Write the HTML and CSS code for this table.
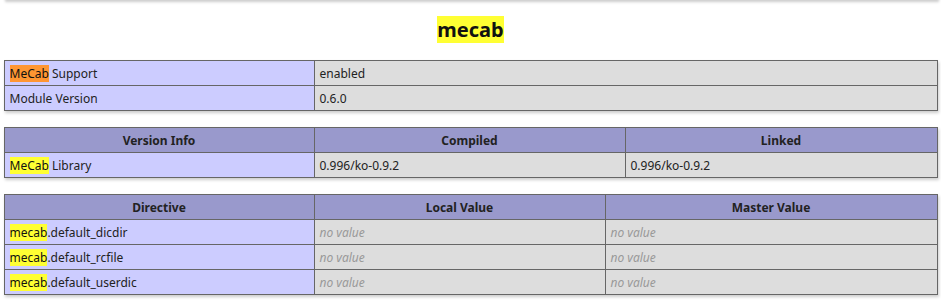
FILE: index.html
```html
<!DOCTYPE html>
<html>
<head>
<meta charset="utf-8">
<title>mecab</title>
<link rel="stylesheet" href="styles.css">
</head>
<body>
<div class="center">
  <div class="prev-shadow"></div>
  <h2 class="title"><mark class="hl">mecab</mark></h2>
  <table>
    <tr><td class="e w1"><mark class="hl cur">MeCab</mark> Support</td><td class="v">enabled</td></tr>
    <tr><td class="e">Module Version</td><td class="v">0.6.0</td></tr>
  </table>
  <table>
    <tr class="h"><th class="w1">Version Info</th><th class="w2">Compiled</th><th>Linked</th></tr>
    <tr><td class="e"><mark class="hl">MeCab</mark> Library</td><td class="v">0.996/ko-0.9.2</td><td class="v">0.996/ko-0.9.2</td></tr>
  </table>
  <table>
    <tr class="h"><th class="w1">Directive</th><th class="w3">Local Value</th><th>Master Value</th></tr>
    <tr><td class="e"><mark class="hl">mecab</mark>.default_dicdir</td><td class="v"><i>no value</i></td><td class="v"><i>no value</i></td></tr>
    <tr><td class="e"><mark class="hl">mecab</mark>.default_rcfile</td><td class="v"><i>no value</i></td><td class="v"><i>no value</i></td></tr>
    <tr><td class="e"><mark class="hl">mecab</mark>.default_userdic</td><td class="v"><i>no value</i></td><td class="v"><i>no value</i></td></tr>
  </table>
</div>
</body>
</html>
```
FILE: styles.css
```css
html, body {
  margin: 0;
  padding: 0;
  background: #fff;
}
body {
  color: #222;
  font-family: "Noto Sans", "Open Sans", sans-serif;
}
.center {
  text-align: center;
}
.prev-shadow {
  width: 934px;
  height: 10px;
  margin: -10px auto 0;
  background: #fff;
  box-shadow: 1px 2px 3px #ccc;
}
.title {
  font-size: 20px;
  line-height: 27px;
  font-weight: bold;
  margin: 16px 0 17px;
}
.hl {
  background: #ffff33;
  color: #111;
  line-height: 15px;
}
.hl.cur {
  background: #ff9632;
}
table {
  border-collapse: collapse;
  width: 934px;
  margin: 0 auto 16px;
  text-align: left;
  box-shadow: 1px 2px 3px #ccc;
}
td, th {
  border: 1px solid #666;
  font-size: 12px;
  line-height: 15px;
  height: 16px;
  padding: 4px 5px;
  vertical-align: middle;
  box-sizing: content-box;
}
th {
  text-align: center;
}
.h {
  background: #99c;
  font-weight: bold;
}
.e {
  background: #ccf;
}
.v {
  background: #ddd;
}
.v i {
  color: #999;
}
.w1 {
  width: 299px;
}
.w2 {
  width: 300px;
}
.w3 {
  width: 280px;
}
```
